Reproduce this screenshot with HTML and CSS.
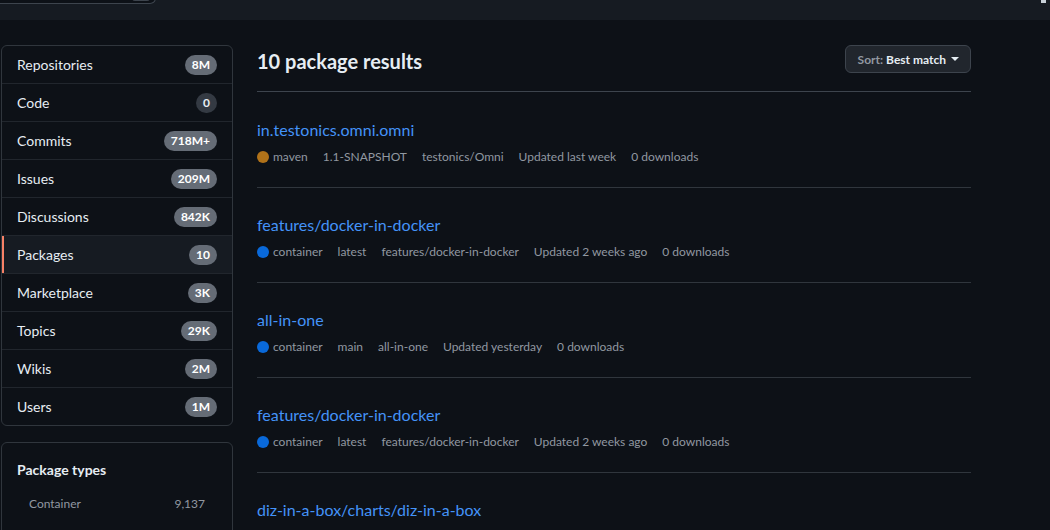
FILE: index.html
```html
<!DOCTYPE html>
<html lang="en">
<head>
<meta charset="utf-8">
<title>Package search results</title>
<link rel="stylesheet" href="styles.css">
</head>
<body>
<header class="topbar">
  <div class="search-box"><span class="kbd"></span></div>
  <span class="top-right"></span>
</header>
<div class="page">
  <aside class="sidebar">
    <nav class="card nav">
      <a class="nav-item"><span>Repositories</span><span class="count">8M</span></a>
      <a class="nav-item"><span>Code</span><span class="count zero">0</span></a>
      <a class="nav-item"><span>Commits</span><span class="count">718M+</span></a>
      <a class="nav-item"><span>Issues</span><span class="count">209M</span></a>
      <a class="nav-item"><span>Discussions</span><span class="count">842K</span></a>
      <a class="nav-item active"><span>Packages</span><span class="count">10</span></a>
      <a class="nav-item"><span>Marketplace</span><span class="count">3K</span></a>
      <a class="nav-item"><span>Topics</span><span class="count">29K</span></a>
      <a class="nav-item"><span>Wikis</span><span class="count">2M</span></a>
      <a class="nav-item"><span>Users</span><span class="count">1M</span></a>
    </nav>
    <section class="card types">
      <h3 class="types-title">Package types</h3>
      <div class="type-row"><span>Container</span><span>9,137</span></div>
    </section>
  </aside>
  <main class="results">
    <div class="results-head">
      <h2 class="results-title">10 package results</h2>
      <button class="sort-btn"><span class="sort-label">Sort:</span> <span class="sort-value">Best match</span><span class="caret"></span></button>
    </div>
    <div class="result first">
      <a class="result-name">in.testonics.omni.omni</a>
      <div class="meta">
        <span class="lang"><span class="dot maven"></span>maven</span>
        <span>1.1-SNAPSHOT</span>
        <span>testonics/Omni</span>
        <span>Updated last week</span>
        <span>0 downloads</span>
      </div>
    </div>
    <div class="result">
      <a class="result-name">features/docker-in-docker</a>
      <div class="meta">
        <span class="lang"><span class="dot container"></span>container</span>
        <span>latest</span>
        <span>features/docker-in-docker</span>
        <span>Updated 2 weeks ago</span>
        <span>0 downloads</span>
      </div>
    </div>
    <div class="result">
      <a class="result-name">all-in-one</a>
      <div class="meta">
        <span class="lang"><span class="dot container"></span>container</span>
        <span>main</span>
        <span>all-in-one</span>
        <span>Updated yesterday</span>
        <span>0 downloads</span>
      </div>
    </div>
    <div class="result">
      <a class="result-name">features/docker-in-docker</a>
      <div class="meta">
        <span class="lang"><span class="dot container"></span>container</span>
        <span>latest</span>
        <span>features/docker-in-docker</span>
        <span>Updated 2 weeks ago</span>
        <span>0 downloads</span>
      </div>
    </div>
    <div class="result">
      <a class="result-name">diz-in-a-box/charts/diz-in-a-box</a>
      <div class="meta">
        <span class="lang"><span class="dot container"></span>container</span>
        <span>latest</span>
        <span>diz-in-a-box/charts/diz-in-a-box</span>
        <span>Updated 2 weeks ago</span>
        <span>0 downloads</span>
      </div>
    </div>
  </main>
</div>
</body>
</html>
```

FILE: styles.css
```css
* { box-sizing: border-box; }
html, body { margin: 0; padding: 0; }
body {
  background: #0d1117;
  color: #e6edf3;
  font-family: Lato, "Noto Sans", "Liberation Sans", sans-serif;
  font-size: 14px;
  overflow: hidden;
  height: 530px;
}
.topbar {
  height: 20px;
  background: #161b22;
  display: flex;
  align-items: flex-end;
  justify-content: space-between;
  overflow: hidden;
  padding-bottom: 16px;
}
.search-box {
  flex: 0 0 156px;
  height: 32px;
  background: #0d1117;
  border: 1px solid #3d444d;
  border-left: none;
  border-radius: 0 0 6px 0;
  display: flex;
  justify-content: flex-end;
  align-items: flex-end;
  padding: 0 5px 2px 0;
}
.kbd {
  width: 18px;
  height: 8px;
  background: #3d444d;
  border-radius: 0 0 3px 3px;
}
.top-right {
  width: 5px;
  height: 3px;
  margin-right: 4px;
  background: #c9d1d9;
  align-self: flex-start;
}
.page {
  display: flex;
  gap: 24px;
  padding: 25px 0 0 1px;
}
.sidebar {
  flex: 0 0 232px;
  display: flex;
  flex-direction: column;
  gap: 16px;
}
.card {
  border: 1px solid #30363d;
  border-radius: 6px;
}
.nav { overflow: hidden; }
.nav-item {
  display: flex;
  align-items: center;
  justify-content: space-between;
  height: 38px;
  padding: 0 15px;
  border-top: 1px solid #21262d;
  color: #e6edf3;
  font-size: 14px;
  position: relative;
}
.nav-item:first-child { border-top: none; height: 37px; }
.nav-item.active { background: #161b22; }
.nav-item.active::before {
  content: "";
  position: absolute;
  left: 0;
  top: 0;
  bottom: 0;
  width: 2px;
  background: #f78166;
}
.count {
  display: inline-block;
  min-width: 20px;
  height: 20px;
  line-height: 20px;
  padding: 0 7px;
  border-radius: 10px;
  background: #656c76;
  color: #ffffff;
  font-size: 12px;
  font-weight: 700;
  text-align: center;
}
.count.zero { background: #343a43; color: #e6edf3; }
.types {
  padding: 15px 15px 60px;
  height: 120px;
}
.types-title {
  margin: 0 0 13px;
  font-size: 14px;
  font-weight: 700;
  line-height: 24px;
}
.type-row {
  display: flex;
  justify-content: space-between;
  padding: 0 12px;
  font-size: 12px;
  color: #9198a1;
  line-height: 18px;
}
.results {
  flex: 0 0 714px;
}
.results-head {
  display: flex;
  align-items: flex-start;
  justify-content: space-between;
  padding-bottom: 14px;
  border-bottom: 1px solid #3d444d;
}
.results-title {
  margin: 0;
  font-size: 20px;
  font-weight: 700;
  line-height: 32px;
  color: #e6edf3;
}
.sort-btn {
  height: 28px;
  padding: 0 11px 0 12px;
  background: #21262d;
  border: 1px solid #3d444d;
  border-radius: 6px;
  font-family: inherit;
  font-size: 12px;
  font-weight: 700;
  color: #e6edf3;
  display: flex;
  align-items: center;
  gap: 3px;
}
.sort-label { color: #9198a1; }
.caret {
  width: 0;
  height: 0;
  margin-left: 2px;
  border-left: 4px solid transparent;
  border-right: 4px solid transparent;
  border-top: 4px solid #e6edf3;
}
.result {
  padding: 25px 0 21px;
  border-bottom: 1px solid #30363d;
}
.result.first { padding-top: 26px; }
.result-name {
  display: block;
  color: #4493f8;
  font-size: 16px;
  line-height: 24px;
}
.meta {
  display: flex;
  gap: 15px;
  margin-top: 6px;
  font-size: 12px;
  line-height: 18px;
  color: #9198a1;
}
.lang { display: flex; align-items: center; gap: 4px; }
.dot {
  width: 12px;
  height: 12px;
  border-radius: 50%;
  display: inline-block;
}
.dot.maven { background: #b07219; }
.dot.container { background: #0969da; }
```
